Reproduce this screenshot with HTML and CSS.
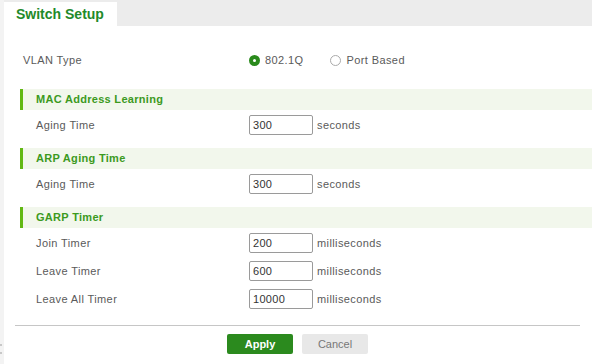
FILE: index.html
```html
<!DOCTYPE html>
<html lang="en">
<head>
    <meta charset="UTF-8">
    <meta name="viewport" content="width=device-width, initial-scale=1.0">
    <title>Switch Setup</title>
    <link rel="stylesheet" href="styles.css">
</head>
<body>
<div class="page">
    <!-- Left splitter strip -->
    <div class="splitter">
        <span class="grip"></span>
        <span class="grip"></span>
    </div>

    <div class="main">
        <!-- Tab bar -->
        <div class="tabbar">
            <div class="tab">Switch Setup</div>
        </div>

        <div class="content">
            <div class="row top-row">
                <div class="label">VLAN Type</div>
                <div class="radios">
                    <label class="radio"><span class="dot checked"></span>802.1Q</label>
                    <label class="radio"><span class="dot"></span>Port Based</label>
                </div>
            </div>

            <!-- MAC Address Learning -->
            <div class="section">
                <div class="section-head">MAC Address Learning</div>
                <div class="row sub">
                    <div class="label">Aging Time</div>
                    <input class="field" type="text" value="300">
                    <span class="unit">seconds</span>
                </div>
            </div>

            <!-- ARP Aging Time -->
            <div class="section">
                <div class="section-head">ARP Aging Time</div>
                <div class="row sub">
                    <div class="label">Aging Time</div>
                    <input class="field" type="text" value="300">
                    <span class="unit">seconds</span>
                </div>
            </div>

            <!-- GARP Timer -->
            <div class="section">
                <div class="section-head">GARP Timer</div>
                <div class="row sub">
                    <div class="label">Join Timer</div>
                    <input class="field" type="text" value="200">
                    <span class="unit">milliseconds</span>
                </div>
                <div class="row sub">
                    <div class="label">Leave Timer</div>
                    <input class="field" type="text" value="600">
                    <span class="unit">milliseconds</span>
                </div>
                <div class="row sub">
                    <div class="label">Leave All Timer</div>
                    <input class="field" type="text" value="10000">
                    <span class="unit">milliseconds</span>
                </div>
            </div>
        </div>

        <!-- Footer buttons -->
        <div class="footer">
            <button class="btn apply">Apply</button>
            <button class="btn cancel">Cancel</button>
        </div>
    </div>
</div>
</body>
</html>
```

FILE: styles.css
```css
/* Base */
body {
    margin: 0;
    font-family: "Liberation Sans", Arial, sans-serif;
    font-size: 11px;
    letter-spacing: 0.4px;
    color: #5a5a5a;
    background: #fff;
}
.page {
    display: flex;
    height: 364px;
}

/* Left splitter strip */
.splitter {
    width: 4px;
    background: #f3f3f3;
    display: flex;
    flex-direction: column;
    justify-content: flex-end;
    gap: 6px;
    padding-bottom: 10px;
    box-sizing: border-box;
}
.splitter .grip {
    width: 2px;
    height: 2px;
    background: #c8c8c8;
}

.main {
    flex: 1;
    display: flex;
    flex-direction: column;
}

/* Tab bar */
.tabbar {
    height: 26px;
    background: #ececec;
    padding-top: 2px;
    box-sizing: border-box;
}
.tab {
    display: inline-block;
    height: 24px;
    line-height: 24px;
    padding: 0 13px 0 12px;
    background: #fff;
    color: #1f8a2a;
    font-weight: bold;
    font-size: 14px;
    letter-spacing: 0;
}

/* Form */
.content {
    padding: 24px 0 0 16px;
}
.row {
    display: flex;
    align-items: center;
    height: 20px;
}
.row .label {
    width: 226px;
}
.top-row {
    padding-left: 3px;
}
.row.sub {
    padding-left: 16px;
    margin-top: 8px;
}
.row.sub .label {
    width: 213px;
}
.section-head + .row.sub {
    margin-top: 5px;
}

/* Radios */
.radios {
    display: flex;
    gap: 27px;
}
.radio {
    display: flex;
    align-items: center;
    gap: 5px;
}
.dot {
    width: 11px;
    height: 11px;
    border: 1px solid #aaa;
    border-radius: 50%;
    box-sizing: border-box;
}
.dot.checked {
    border: 4px solid #2a8a1c;
}

/* Section header */
.section {
    margin-top: 19px;
}
.section + .section {
    margin-top: 13px;
}
.section-head {
    height: 21px;
    line-height: 21px;
    background: #f2f7ec;
    border-left: 3px solid #62b814;
    padding-left: 13px;
    color: #3c9a1e;
    font-weight: bold;
    letter-spacing: 0.3px;
}

/* Inputs */
.field {
    width: 64px;
    height: 20px;
    box-sizing: border-box;
    border: 1px solid #9a9a9a;
    border-radius: 2px;
    padding: 0 3px;
    font-family: inherit;
    font-size: 11px;
    letter-spacing: 0.3px;
    color: #333;
    margin: 0;
}
.unit {
    margin-left: 4px;
}

/* Footer */
.footer {
    margin: 16px 12px 0 11px;
    border-top: 1px solid #c6c6c6;
    padding-top: 8px;
    display: flex;
    justify-content: center;
    gap: 9px;
}
.btn {
    width: 66px;
    height: 20px;
    border: none;
    border-radius: 2px;
    font-family: inherit;
    font-size: 11px;
    padding: 0;
}
.btn.apply {
    background: #2b8a1e;
    color: #fff;
    font-weight: bold;
}
.btn.cancel {
    background: #e8e8e8;
    color: #777;
}
```
